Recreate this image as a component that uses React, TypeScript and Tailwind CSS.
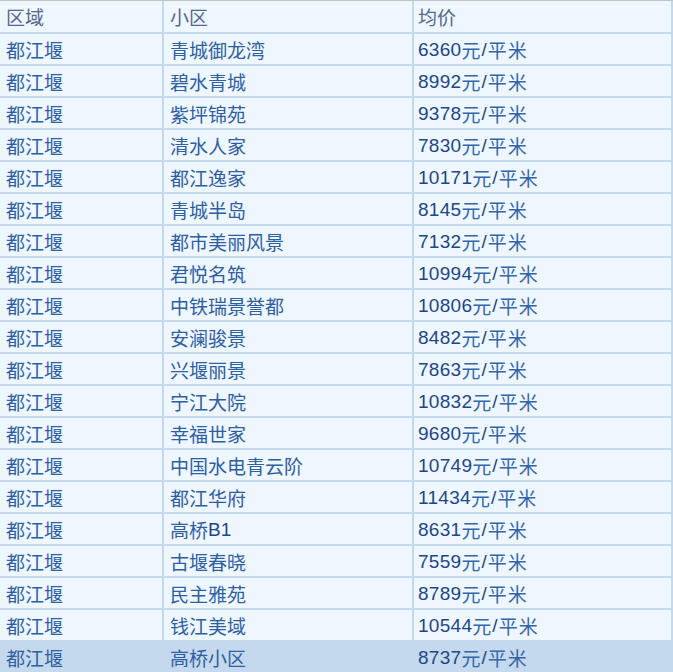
const rows: [string, string, number][] = [
  ["都江堰", "青城御龙湾", 6360],
  ["都江堰", "碧水青城", 8992],
  ["都江堰", "紫坪锦苑", 9378],
  ["都江堰", "清水人家", 7830],
  ["都江堰", "都江逸家", 10171],
  ["都江堰", "青城半岛", 8145],
  ["都江堰", "都市美丽风景", 7132],
  ["都江堰", "君悦名筑", 10994],
  ["都江堰", "中铁瑞景誉都", 10806],
  ["都江堰", "安澜骏景", 8482],
  ["都江堰", "兴堰丽景", 7863],
  ["都江堰", "宁江大院", 10832],
  ["都江堰", "幸福世家", 9680],
  ["都江堰", "中国水电青云阶", 10749],
  ["都江堰", "都江华府", 11434],
  ["都江堰", "高桥B1", 8631],
  ["都江堰", "古堰春晓", 7559],
  ["都江堰", "民主雅苑", 8789],
  ["都江堰", "钱江美域", 10544],
  ["都江堰", "高桥小区", 8737],
]

const cjk = "font-['Noto_Sans_CJK_SC',sans-serif]"
const num = "font-['Liberation_Sans',sans-serif] text-[#1d4785]"

export default function App() {
  return (
    <div className="w-[673px] h-[672px] overflow-hidden bg-white">
      <div className="border-t border-[#c3c3c3] bg-[#c5d9ee] pr-[2px]">
        <div className="grid grid-cols-[162px_248px_257px] gap-[2px] text-[19px] leading-none">
          {/* header */}
          <div className={`h-[31px] flex items-center pl-[6px] bg-[#eef6ff] text-[#56688a] ${cjk}`}>区域</div>
          <div className={`h-[31px] flex items-center pl-[6px] bg-[#eef6ff] text-[#56688a] ${cjk}`}>小区</div>
          <div className={`h-[31px] flex items-center pl-[4px] bg-[#eef6ff] text-[#56688a] ${cjk}`}>均价</div>

          {rows.map(([area, name, price], i) => {
            const last = i === rows.length - 1
            const bg = last ? "bg-[#c5d9ee]" : "bg-[#eef6ff]"
            return (
              <div key={name} className="contents">
                <div className={`h-[30px] flex items-center pl-[6px] ${bg} text-[#2f5f9f] ${cjk}`}>{area}</div>
                <div className={`h-[30px] flex items-center pl-[6px] ${bg} text-[#2f5f9f] ${cjk}`}>
                  {name.split(/(B1)/).map((p, j) =>
                    p === "B1" ? (
                      <span key={j} className={num}>{p}</span>
                    ) : (
                      <span key={j}>{p}</span>
                    )
                  )}
                </div>
                <div className={`h-[30px] flex items-center pl-[4px] ${bg} text-[#3566a6] ${cjk}`}>
                  <span className={`${num} tracking-[0.3px]`}>{price}</span>
                  <span>元</span>
                  <span className={`${num} px-[1px]`}>/</span>
                  <span className="tracking-[1px]">平米</span>
                </div>
              </div>
            )
          })}
        </div>
      </div>
    </div>
  )
}
